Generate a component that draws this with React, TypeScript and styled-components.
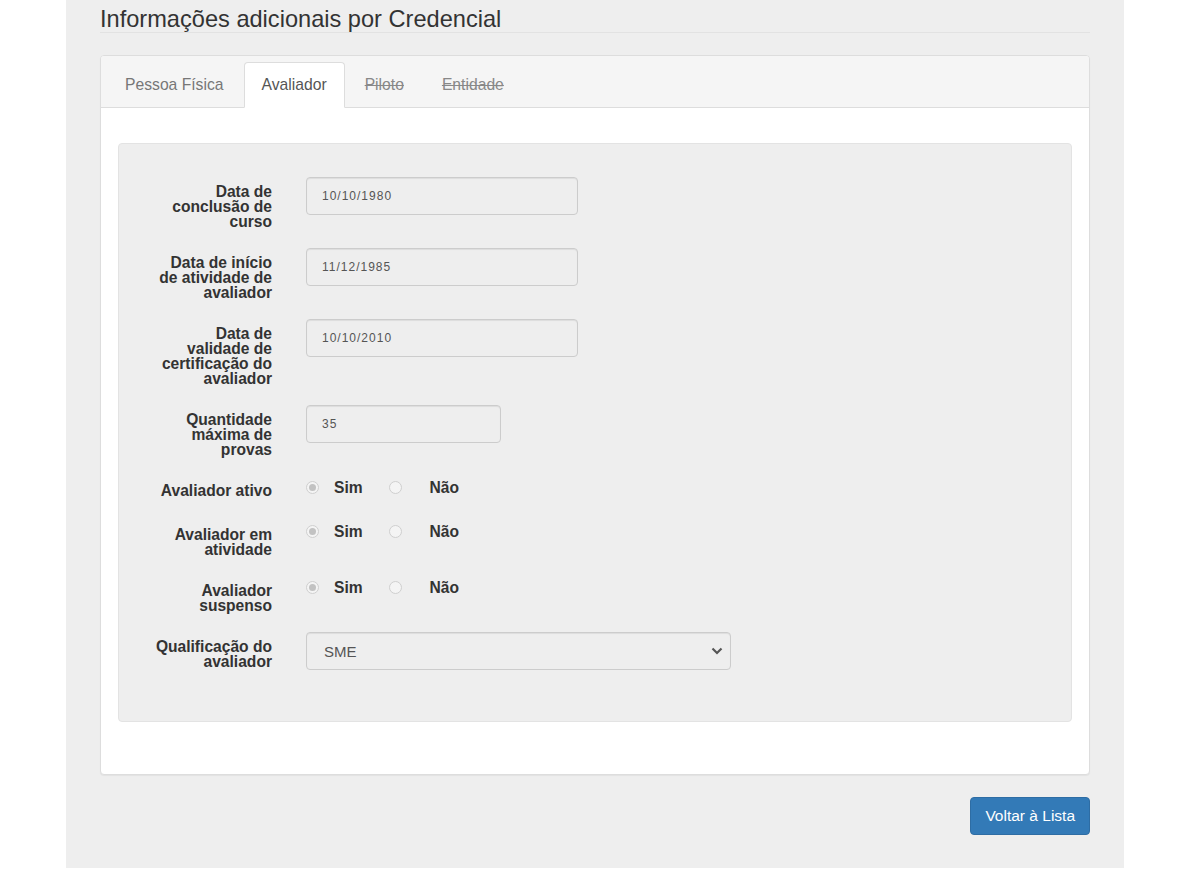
import React from "react";
import styled, { createGlobalStyle } from "styled-components";

const GlobalStyle = createGlobalStyle`
  html, body { margin: 0; padding: 0; background: #ffffff; }
  body { font-family: "Liberation Sans", Arial, sans-serif; color: #333; }
  * { box-sizing: border-box; }
`;

const Page = styled.div`
  width: 1058px;
  margin-left: 66px;
  background: #eeeeee;
  padding: 6px 34px 33px;
  display: flex;
  flex-direction: column;
`;

const Heading = styled.h3`
  margin: 0;
  font-size: 23.6px;
  line-height: 26px;
  font-weight: 400;
  color: #333;
  border-bottom: 1px solid #e2e2e2;
`;

const Card = styled.div`
  margin-top: 22px;
  background: #fff;
  border: 1px solid #dddddd;
  border-radius: 4px;
  box-shadow: 0 1px 1px rgba(0, 0, 0, 0.05);
  overflow: hidden;
`;

const TabBar = styled.div`
  display: flex;
  gap: 2px;
  padding: 6px 6px 0;
  background: #f5f5f5;
  border-bottom: 1px solid #dddddd;
`;

const Tab = styled.div<{ $active?: boolean; $disabled?: boolean }>`
  padding: 12px 17px 12px;
  margin-bottom: -1px;
  font-size: 15.7px;
  line-height: 20px;
  border: 1px solid ${(p) => (p.$active ? "#dddddd" : "transparent")};
  border-bottom-color: ${(p) => (p.$active ? "#ffffff" : "transparent")};
  border-radius: 4px 4px 0 0;
  background: ${(p) => (p.$active ? "#ffffff" : "transparent")};
  color: ${(p) => (p.$active ? "#555555" : p.$disabled ? "#888888" : "#777777")};
  text-decoration: ${(p) => (p.$disabled ? "line-through" : "none")};
  white-space: nowrap;
`;

const CardBody = styled.div`
  padding: 35px 17px 52px;
`;

const Well = styled.div`
  background: #eeeeee;
  border: 1px solid #e3e3e3;
  border-radius: 4px;
  padding: 33px 0 51px;
  display: flex;
  flex-direction: column;
  gap: 19px;
`;

const Row = styled.div`
  display: grid;
  grid-template-columns: 153px 1fr;
  column-gap: 34px;
  align-items: start;
`;

const Label = styled.label`
  padding: 7px 0 0 34px;
  text-align: right;
  font-weight: 700;
  font-size: 15.6px;
  line-height: 15px;
  color: #333;
`;

const TextInput = styled.input<{ $width: number }>`
  width: ${(p) => p.$width}px;
  height: 38px;
  padding: 0 15px;
  border: 1px solid #cccccc;
  border-radius: 4px;
  background: #eeeeee;
  box-shadow: inset 0 1px 1px rgba(0, 0, 0, 0.075);
  font-family: "Liberation Sans", Arial, sans-serif;
  font-size: 12px;
  letter-spacing: 1px;
  color: #555;
  outline: none;
`;

const RadioGroup = styled.div`
  display: flex;
  align-items: center;
  height: 25px;
  padding-bottom: 2px;
  line-height: 15px;
`;

const RadioOption = styled.div<{ $offset: number; $textGap: number }>`
  display: flex;
  align-items: center;
  margin-left: ${(p) => p.$offset}px;
  gap: ${(p) => p.$textGap}px;
  font-weight: 700;
  font-size: 15.6px;
  color: #333;
`;

const RadioCircle = styled.span<{ $checked?: boolean }>`
  width: 13px;
  height: 13px;
  border-radius: 50%;
  border: 1px solid #cfcfcf;
  background: #f4f4f4;
  display: flex;
  align-items: center;
  justify-content: center;
  &::after {
    content: "";
    width: 7px;
    height: 7px;
    border-radius: 50%;
    background: ${(p) => (p.$checked ? "#c2c2c2" : "transparent")};
  }
`;

const SelectWrap = styled.div`
  position: relative;
  width: 425px;
  height: 38px;
`;

const Select = styled.select`
  appearance: none;
  -webkit-appearance: none;
  width: 100%;
  height: 38px;
  padding: 0 17px;
  border: 1px solid #cccccc;
  border-radius: 4px;
  background: #eeeeee;
  box-shadow: inset 0 1px 1px rgba(0, 0, 0, 0.075);
  font-family: "Liberation Sans", Arial, sans-serif;
  font-size: 15px;
  color: #555;
  outline: none;
`;

const Chevron = styled.svg`
  position: absolute;
  right: 8px;
  top: 15px;
  pointer-events: none;
`;

const Footer = styled.div`
  display: flex;
  justify-content: flex-end;
  margin-top: 22px;
`;

const Button = styled.button`
  height: 38px;
  padding: 0 14px;
  background: #337ab7;
  border: 1px solid #2e6da4;
  border-radius: 4px;
  color: #fff;
  font-family: "Liberation Sans", Arial, sans-serif;
  font-size: 15.5px;
  cursor: pointer;
`;

type RadioRowProps = { label: string };

const RadioRow: React.FC<RadioRowProps> = ({ label }) => (
  <Row>
    <Label>{label}</Label>
    <RadioGroup role="radiogroup">
      <RadioOption $offset={0} $textGap={15}>
        <RadioCircle $checked role="radio" aria-checked="true" />
        <span>Sim</span>
      </RadioOption>
      <RadioOption $offset={26} $textGap={28}>
        <RadioCircle role="radio" aria-checked="false" />
        <span>Não</span>
      </RadioOption>
    </RadioGroup>
  </Row>
);

const InputRow: React.FC<{ label: string; value: string; width: number }> = ({ label, value, width }) => (
  <Row>
    <Label>{label}</Label>
    <TextInput $width={width} value={value} readOnly />
  </Row>
);

export default function App() {
  return (
    <>
      <GlobalStyle />
      <Page>
        <Heading>Informações adicionais por Credencial</Heading>
        <Card>
          <TabBar>
            <Tab>Pessoa Física</Tab>
            <Tab $active>Avaliador</Tab>
            <Tab $disabled>Piloto</Tab>
            <Tab $disabled>Entidade</Tab>
          </TabBar>
          <CardBody>
            <Well>
              <InputRow label="Data de conclusão de curso" value="10/10/1980" width={272} />
              <InputRow label="Data de início de atividade de avaliador" value="11/12/1985" width={272} />
              <InputRow label="Data de validade de certificação do avaliador" value="10/10/2010" width={272} />
              <InputRow label="Quantidade máxima de provas" value="35" width={195} />
              <RadioRow label="Avaliador ativo" />
              <RadioRow label="Avaliador em atividade" />
              <RadioRow label="Avaliador suspenso" />
              <Row>
                <Label>Qualificação do avaliador</Label>
                <SelectWrap>
                  <Select defaultValue="SME">
                    <option value="SME">SME</option>
                  </Select>
                  <Chevron width="12" height="8" viewBox="0 0 12 8">
                    <path d="M1.5 1.5 L6 6 L10.5 1.5" fill="none" stroke="#555" strokeWidth="2.2" />
                  </Chevron>
                </SelectWrap>
              </Row>
            </Well>
          </CardBody>
        </Card>
        <Footer>
          <Button>Voltar à Lista</Button>
        </Footer>
      </Page>
    </>
  );
}
